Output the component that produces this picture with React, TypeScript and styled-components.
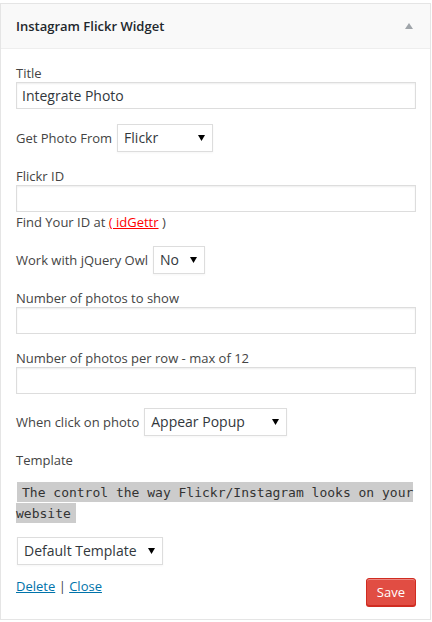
import React from "react";
import styled, { createGlobalStyle } from "styled-components";

const Global = createGlobalStyle`
  html, body { margin: 0; padding: 0; background: #fff; }
  body { font-family: "Open Sans", "Liberation Sans", sans-serif; color: #444; }
  * { box-sizing: border-box; }
`;

const Widget = styled.div`
  margin-top: 3px;
  width: 431px;
  border: 1px solid #e5e5e5;
  background: #fff;
  box-shadow: 0 1px 1px rgba(0, 0, 0, 0.04);
`;

const Header = styled.div`
  height: 45px;
  display: flex;
  align-items: center;
  justify-content: space-between;
  padding: 0 16px 0 15px;
  background: #f9f9f9;
  border-bottom: 1px solid #eee;
`;

const HeaderTitle = styled.h3`
  margin: 0;
  font-size: 13px;
  font-weight: 600;
  color: #23282d;
  line-height: 18px;
`;

const Toggle = styled.span`
  display: flex;
  width: 10px;
  justify-content: center;
  margin-top: -1px;
`;

const Body = styled.div`
  padding: 15px 14px 13px 15px;
  display: flex;
  flex-direction: column;
`;

const Field = styled.div<{ $gap?: number }>`
  display: flex;
  flex-direction: column;
  margin-bottom: ${(p) => (p.$gap ?? 15)}px;
`;

const Label = styled.label`
  font-size: 13px;
  line-height: 18px;
  color: #444;
`;

const TextInput = styled.input`
  width: 100%;
  height: 27px;
  margin: 0;
  padding: 0 5px;
  border: 1px solid #ddd;
  box-shadow: inset 0 1px 2px rgba(0, 0, 0, 0.07);
  background: #fff;
  font-family: "Open Sans", "Liberation Sans", sans-serif;
  font-size: 14px;
  color: #32373c;
  outline: none;
`;

const InlineRow = styled.div<{ $gap?: number }>`
  display: flex;
  align-items: center;
  gap: 5px;
  margin-bottom: ${(p) => (p.$gap ?? 15)}px;
`;

const arrow =
  "url(\"data:image/svg+xml;utf8,<svg xmlns='http://www.w3.org/2000/svg' width='7' height='6'><path d='M0 0H7L3.5 6Z' fill='black'/></svg>\")";

const Select = styled.select<{ $w: number; $indent?: number }>`
  appearance: none;
  -webkit-appearance: none;
  width: ${(p) => p.$w}px;
  height: 28px;
  margin: 0 0 0 ${(p) => p.$indent ?? 0}px;
  padding: 0 16px 0 6px;
  border: 1px solid #ddd;
  border-radius: 0;
  box-shadow: 0 1px 2px rgba(0, 0, 0, 0.04);
  background: #fff ${arrow} no-repeat right 7px center;
  font-family: "Open Sans", "Liberation Sans", sans-serif;
  font-size: 14px;
  color: #32373c;
  line-height: 26px;
  outline: none;
`;

const Help = styled.span`
  font-size: 13px;
  line-height: 18px;
  margin-top: 1px;
  color: #444;
`;

const RedLink = styled.a`
  color: #ff0000;
  text-decoration: underline;
`;

const CodeBlock = styled.div`
  margin-bottom: 14px;
  line-height: 19.5px;
`;

const Code = styled.code`
  font-family: "DejaVu Sans Mono", "Liberation Mono", monospace;
  font-size: 13px;
  background: #ccc;
  color: #333;
  padding: 3px 5px 2px;
  margin: 0 1px;
`;

const Footer = styled.div`
  display: flex;
  justify-content: space-between;
  align-items: flex-start;
`;

const Links = styled.div`
  font-size: 13px;
  line-height: 18px;
  margin-top: -1px;
  color: #444;
`;

const BlueLink = styled.a`
  color: #0073aa;
  text-decoration: underline;
`;

const SaveButton = styled.button`
  height: 28px;
  padding: 0 10px;
  border: 1px solid #d02c21;
  border-radius: 3px;
  background: #e14d43;
  color: #fff;
  font-family: "Open Sans", "Liberation Sans", sans-serif;
  font-size: 13px;
  line-height: 26px;
  box-shadow: inset 0 1px 0 #ec8a85, 0 1px 0 #d02c21;
  cursor: pointer;
`;

export default function App() {
  return (
    <>
      <Global />
      <Widget>
        <Header>
          <HeaderTitle>Instagram Flickr Widget</HeaderTitle>
          <Toggle>
            <svg width="8" height="6" viewBox="0 0 8 6">
              <path d="M0 6L4 0L8 6Z" fill="#a0a5aa" />
            </svg>
          </Toggle>
        </Header>
        <Body>
          <Field>
            <Label>Title</Label>
            <TextInput defaultValue="Integrate Photo" />
          </Field>
          <InlineRow>
            <Label>Get Photo From</Label>
            <Select $w={96} defaultValue="flickr">
              <option value="flickr">Flickr</option>
              <option value="instagram">Instagram</option>
            </Select>
          </InlineRow>
          <Field>
            <Label>Flickr ID</Label>
            <TextInput />
            <Help>
              Find Your ID at <RedLink href="#">( idGettr</RedLink> )
            </Help>
          </Field>
          <InlineRow>
            <Label>Work with jQuery Owl</Label>
            <Select $w={52} defaultValue="no">
              <option value="no">No</option>
              <option value="yes">Yes</option>
            </Select>
          </InlineRow>
          <Field>
            <Label>Number of photos to show</Label>
            <TextInput />
          </Field>
          <Field $gap={14}>
            <Label>Number of photos per row - max of 12</Label>
            <TextInput />
          </Field>
          <InlineRow>
            <Label>When click on photo</Label>
            <Select $w={143} defaultValue="popup">
              <option value="popup">Appear Popup</option>
              <option value="link">Open Link</option>
            </Select>
          </InlineRow>
          <Field $gap={13}>
            <Label>Template</Label>
          </Field>
          <CodeBlock>
            <Code>The control the way Flickr/Instagram looks on your website</Code>
          </CodeBlock>
          <InlineRow $gap={13}>
            <Select $w={146} $indent={1} defaultValue="default">
              <option value="default">Default Template</option>
            </Select>
          </InlineRow>
          <Footer>
            <Links>
              <BlueLink href="#">Delete</BlueLink> | <BlueLink href="#">Close</BlueLink>
            </Links>
            <SaveButton>Save</SaveButton>
          </Footer>
        </Body>
      </Widget>
    </>
  );
}
